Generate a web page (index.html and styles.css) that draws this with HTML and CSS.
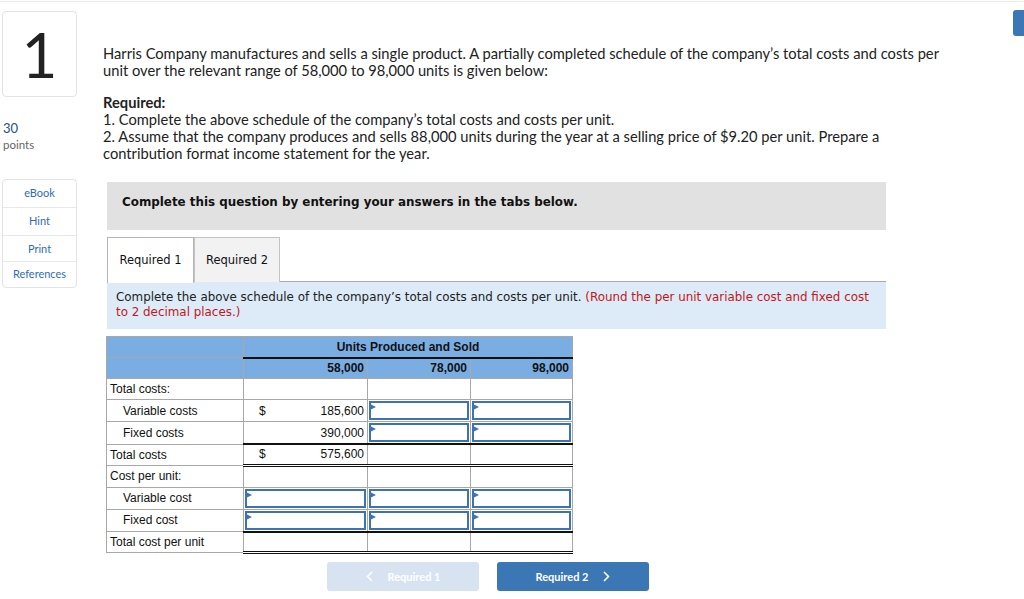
FILE: index.html
```html
<!DOCTYPE html>
<html>
<head>
<meta charset="utf-8">
<link rel="stylesheet" href="styles.css">
</head>
<body>
<div class="topline"></div>
<div class="badge"></div>
<div class="page">
  <aside class="left">
    <div class="numbox">1</div>
    <div class="points"><div class="pts-num">30</div><div class="pts-label">points</div></div>
    <nav class="side">
      <div class="side-item">eBook</div>
      <div class="side-item">Hint</div>
      <div class="side-item">Print</div>
      <div class="side-item">References</div>
    </nav>
  </aside>
  <main class="main">
    <p class="intro">Harris Company manufactures and sells a single product. A partially completed schedule of the company’s total costs and costs per unit over the relevant range of 58,000 to 98,000 units is given below:</p>
    <p class="req"><b>Required:</b><br>1. Complete the above schedule of the company’s total costs and costs per unit.<br>2. Assume that the company produces and sells 88,000 units during the year at a selling price of $9.20 per unit. Prepare a contribution format income statement for the year.</p>
    <div class="graybox">Complete this question by entering your answers in the tabs below.</div>
    <div class="tabs">
      <div class="tab active">Required 1</div>
      <div class="tab">Required 2</div>
    </div>
    <div class="instr">Complete the above schedule of the company’s total costs and costs per unit. <span class="red">(Round the per unit variable cost and fixed cost</span> <span class="red">to 2 decimal places.)</span></div>
    <table class="sched">
      <colgroup><col class="c1"><col class="c2"><col class="c3"><col class="c4"></colgroup>
      <tr class="h1"><th class="lab"></th><th colspan="3" class="center blk">Units Produced and Sold</th></tr>
      <tr class="h2"><th class="lab"></th><th>58,000</th><th>78,000</th><th>98,000</th></tr>
      <tr><td class="lab">Total costs:</td><td></td><td></td><td></td></tr>
      <tr><td class="lab ind">Variable costs</td><td><div class="amt"><span>$</span><span>185,600</span></div></td><td class="in"><div class="box"></div></td><td class="in"><div class="box"></div></td></tr>
      <tr><td class="lab ind">Fixed costs</td><td class="bb"><div class="amt"><span></span><span>390,000</span></div></td><td class="in bb"><div class="box"></div></td><td class="in bb"><div class="box"></div></td></tr>
      <tr><td class="lab">Total costs</td><td class="dbl"><div class="amt"><span>$</span><span>575,600</span></div></td><td class="dbl"></td><td class="dbl"></td></tr>
      <tr class="cpu"><td class="lab">Cost per unit:</td><td></td><td></td><td></td></tr>
      <tr><td class="lab ind">Variable cost</td><td class="in"><div class="box"></div></td><td class="in"><div class="box"></div></td><td class="in"><div class="box"></div></td></tr>
      <tr><td class="lab ind">Fixed cost</td><td class="in bb"><div class="box"></div></td><td class="in bb"><div class="box"></div></td><td class="in bb"><div class="box"></div></td></tr>
      <tr><td class="lab">Total cost per unit</td><td class="dbl"></td><td class="dbl"></td><td class="dbl"></td></tr>
    </table>
    <div class="nav">
      <div class="btn disabled"><svg class="chev" width="7" height="11" viewBox="0 0 7 11"><path d="M6 1 L1.5 5.5 L6 10" fill="none" stroke="#fff" stroke-width="1.6"/></svg>Required 1</div>
      <div class="btn primary">Required 2<svg class="chev r" width="7" height="11" viewBox="0 0 7 11"><path d="M1 1 L5.5 5.5 L1 10" fill="none" stroke="#fff" stroke-width="1.6"/></svg></div>
    </div>
  </main>
</div>
</body>
</html>
```

FILE: styles.css
```css
* { box-sizing: border-box; }
html, body { margin: 0; padding: 0; background: #fff; }
body { font-family: Lato, "Open Sans", sans-serif; color: #222; width: 1024px; height: 599px; overflow: hidden; position: relative; }
.topline { height: 2px; border-bottom: 1px solid #ececec; }
.badge { position: absolute; left: 1013px; top: 10px; width: 20px; height: 26px; background: #3b76b5; border-radius: 3px; }
.page { display: flex; padding-top: 9px; }
.left { width: 75px; margin-left: 2px; flex: none; }
.numbox { height: 86px; border: 1px solid #e3e3e3; border-radius: 4px; font-size: 62px; line-height: 84px; text-align: center; color: #222; font-weight: 400; }
.points { margin-top: 23px; padding-left: 1px; }
.pts-num { font-size: 13px; color: #1e4f7f; line-height: 16px; }
.pts-label { font-size: 11.5px; color: #666; line-height: 17px; }
.side { margin-top: 26px; border: 1px solid #e3e3e3; border-radius: 4px; }
.side-item { height: 28px; line-height: 26px; text-align: center; font-size: 11px; color: #2f6db3; border-bottom: 1px solid #e8e8e8; }
.side-item:nth-child(3) { height: 26px; line-height: 26px; }
.side-item:last-child { border-bottom: none; height: 25px; line-height: 24px; }
.main { margin-left: 26px; width: 860px; }
.intro, .req { margin: 0; width: 842px; font-size: 14.7px; line-height: 17px; color: #222; }
.intro { margin-top: 34px; }
.req { margin-top: 15px; }
.req b { font-weight: 700; }
.graybox { margin: 20px 0 0 4px; width: 779px; height: 48px; background: #e1e1e1; padding: 12px 0 0 15px; font-family: "DejaVu Sans", Verdana, sans-serif; font-weight: 700; font-size: 11.9px; line-height: 16px; color: #111; }
.tabs { margin: 7px 0 0 4px; width: 779px; display: flex; border-bottom: 1px solid #aaa; height: 45px; }
.tab { width: 87px; height: 45px; border: 1px solid #c4c4c4; border-bottom: none; background: #f2f2f2; font-family: "DejaVu Sans", Verdana, sans-serif; font-size: 11.5px; line-height: 44px; text-align: center; color: #111; }
.tab + .tab { width: 86px; }
.tab.active { background: #fff; height: 46px; border-color: #b5b5b5; position: relative; z-index: 1; }
.instr { margin-left: 4px; width: 779px; height: 47px; background: #dcebf7; padding: 8px 8px 0 9px; font-family: "DejaVu Sans", Verdana, sans-serif; font-size: 11.9px; line-height: 15px; color: #222; }
.red { color: #c4161c; }
.sched { margin: 7px 0 0 3px; border-collapse: collapse; font-family: "Liberation Sans", Arial, sans-serif; font-size: 12px; color: #111; table-layout: fixed; width: 466px; }
.c1 { width: 137px; } .c2 { width: 124px; } .c3 { width: 103px; } .c4 { width: 102px; }
.sched th, .sched td { border: 1px solid #a8a8a8; padding: 0 3px; height: 21px; line-height: 14px; }
.sched tr.cpu td { height: 22px; }
.sched th { background: #7aaee2; font-weight: 700; text-align: right; }
.sched th.center { text-align: center; }
.sched th.blk { border-bottom: 2px solid #111; }
.sched td.lab { text-align: left; }
.sched td.ind { padding-left: 16px; }
.amt { display: flex; justify-content: space-between; padding-left: 12px; }
.sched td.in { padding: 1px; }
.box { height: 19px; border: 2px solid #3d72b4; position: relative; background: #fff; }
.box::before { content: ""; position: absolute; left: -1px; top: 1px; border-left: 6px solid #3d72b4; border-top: 3px solid transparent; border-bottom: 3px solid transparent; width: 0; height: 0; }
.sched td.bb { border-bottom: 2px solid #111; }
.sched td.dbl { border-bottom: 3px double #111; }
.nav { display: flex; margin: 8px 0 0 224px; gap: 18px; }
.btn { width: 152px; height: 29px; border-radius: 3px; font-family: Lato, "Open Sans", sans-serif; font-weight: 700; font-size: 11px; color: #fff; display: flex; align-items: center; justify-content: center; }
.btn.disabled { background: #d7e3f1; }
.btn.primary { background: #3b76b5; }
.chev { margin-right: 15px; }
.chev.r { margin-right: 0; margin-left: 15px; }
```
